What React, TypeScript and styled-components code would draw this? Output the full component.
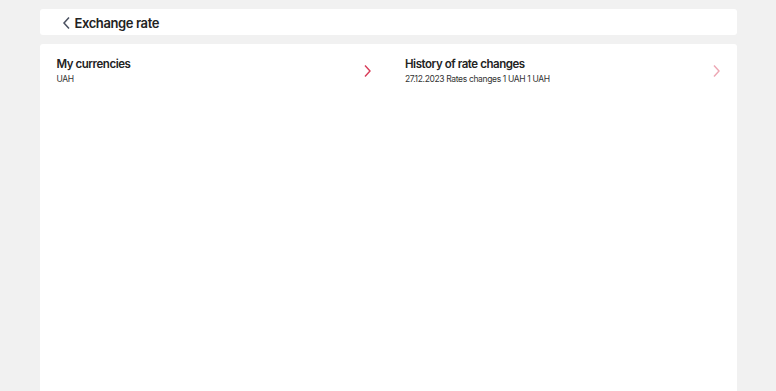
import { FC } from "react";
import styled, { createGlobalStyle } from "styled-components";

const GlobalStyle = createGlobalStyle`
  html, body {
    margin: 0;
    padding: 0;
    background: #f1f1f1;
    font-family: Inter, "Noto Sans", sans-serif;
    color: #232323;
  }
`;

const Page = styled.div`
  width: 697px;
  margin: 0 auto;
  padding-top: 9px;
  display: flex;
  flex-direction: column;
  gap: 9px;
  height: 391px;
  box-sizing: border-box;
`;

const Header = styled.div`
  height: 26px;
  background: #fff;
  border-radius: 3px;
  display: flex;
  align-items: center;
  padding: 1px 0 0 22px;
  box-sizing: border-box;
  gap: 4px;
`;

const Title = styled.h1`
  margin: 0;
  font-size: 13px;
  font-weight: 600;
  letter-spacing: -0.4px;
  color: #222;
`;

const Card = styled.div`
  flex: 1;
  background: #fff;
  border-radius: 3px 3px 0 0;
  padding: 13px 17px;
  display: grid;
  grid-template-columns: 1fr 1fr;
  column-gap: 34px;
  align-content: start;
`;

const Row = styled.div`
  display: flex;
  align-items: center;
  justify-content: space-between;
  cursor: pointer;
`;

const RowText = styled.div`
  display: flex;
  flex-direction: column;
  gap: 2px;
`;

const RowTitle = styled.div`
  font-size: 11.5px;
  font-weight: 600;
  line-height: 15px;
  letter-spacing: -0.45px;
  color: #232323;
`;

const RowSub = styled.div`
  font-size: 8.5px;
  line-height: 11px;
  color: #333;
  letter-spacing: -0.35px;
`;

const Chevron = styled.svg<{ $faded?: boolean }>`
  width: 10px;
  height: 14px;
  margin-right: -1px;
  opacity: ${(p) => (p.$faded ? 0.45 : 1)};
`;

const Arrow: FC<{ faded?: boolean }> = ({ faded }) => (
  <Chevron viewBox="0 0 10 14" $faded={faded}>
    <path d="M3 1.5 L8 7 L3 12.5" fill="none" stroke="#d83c58" strokeWidth="1.4" />
  </Chevron>
);

const BackIcon = () => (
  <svg width="9" height="14" viewBox="0 0 9 14">
    <path d="M7 1.5 L2 7 L7 12.5" fill="none" stroke="#4a5060" strokeWidth="1.5" />
  </svg>
);

const items = [
  { title: "My currencies", sub: "UAH", faded: false },
  { title: "History of rate changes", sub: "27.12.2023 Rates changes 1 UAH 1 UAH", faded: true },
];

export default function App() {
  return (
    <>
      <GlobalStyle />
      <Page>
        <Header>
          <BackIcon />
          <Title>Exchange rate</Title>
        </Header>
        <Card>
          {items.map((it) => (
            <Row key={it.title}>
              <RowText>
                <RowTitle>{it.title}</RowTitle>
                <RowSub>{it.sub}</RowSub>
              </RowText>
              <Arrow faded={it.faded} />
            </Row>
          ))}
        </Card>
      </Page>
    </>
  );
}
